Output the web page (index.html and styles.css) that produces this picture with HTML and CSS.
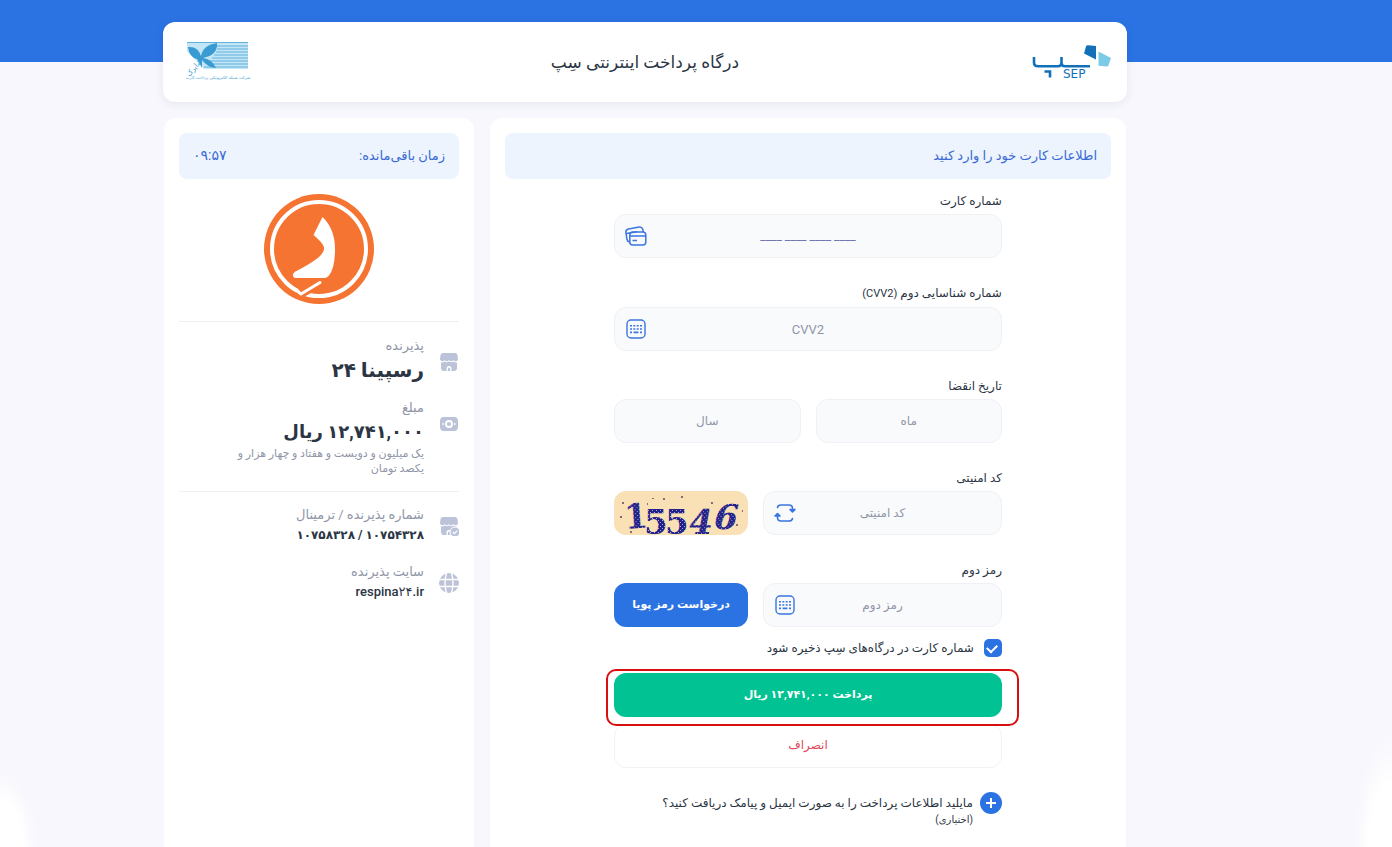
FILE: index.html
```html
<!DOCTYPE html>
<html lang="fa" dir="rtl">
<head>
    <meta charset="UTF-8">
    <meta name="viewport" content="width=device-width, initial-scale=1">
    <title>درگاه پرداخت اینترنتی سِپ</title>
    <link rel="stylesheet" href="styles.css">
</head>
<body>
<svg class="defs" width="0" height="0" aria-hidden="true">
    <symbol id="keyboard" viewBox="0 0 20 20">
        <rect x="1" y="1" width="18" height="18" rx="4" fill="none" stroke="currentColor" stroke-width="1.4"/>
        <path d="M4 6.8h2M7.3 6.8h2M10.7 6.8h2M14 6.8h2M4 10h2M7.3 10h2M10.7 10h2M14 10h2M4 13.4h2M7.6 13.4h4.8M14 13.4h2" fill="none" stroke="currentColor" stroke-width="1.6"/>
    </symbol>
    <symbol id="shop" viewBox="0 0 20 20">
        <path d="M4 1h12q2 0 2.500 2L19 7.500q-.6 1.800-2.300 1.800T14.500 8q-.8 1.300-2.300 1.300T10 8Q9.300 9.300 7.800 9.300T5.500 8Q4.800 9.300 3.300 9.300T1 7.500L1.500 3Q2 1 4 1z"/>
        <path d="M2 10.500q2.200.3 3.500-1 2 1.600 4.500 0 2.400 1.600 4.500 0 1.300 1.300 3.500 1V16q0 3-3 3h-2.500v-2.500Q12.500 14 10 14t-2.500 2.500V19H5q-3 0-3-3z"/>
        <path d="M8.800 19v-2q0-1.500 1.200-1.500t1.200 1.500v2z"/>
    </symbol>
</svg>
<div class="page">
    <header class="header">
        <svg class="logo-sep" viewBox="0 0 80 34" role="img" aria-label="SEP">
            <path d="M54 1.500q.5-1.500 2-1.300l8 .8v13.500L52 8.500z" fill="#1170b8"/>
            <path d="M66.500 6.500L79 13l-2.600 7.500q-.5 1.200-1.800 1l-8.100-.8z" fill="#7bcbe6"/>
            <path d="M2 12v5.500q0 3.800 4 3.800h20q3.500 0 3.500-3.500V12m0 6q0 3.300 3.500 3.300h25" fill="none" stroke="#1170b8" stroke-width="2.600"/>
            <path d="M12.500 26.500h5.500v6" fill="none" stroke="#1170b8" stroke-width="2.600"/>
            <text class="sep-name" x="31" y="33">SEP</text>
        </svg>
        <h1 class="title">درگاه پرداخت اینترنتی سِپ</h1>
        <svg class="logo-shaparak" viewBox="0 0 62 42" role="img" aria-label="شاپرک">
            <path d="M0 1h61v27H17L0 10z" fill="#c3e6f6"/>
            <path d="M0 1.500h61M29 5h32M30 8h31M29 11h32M27 14h34M25 17h36M18 20h43M20 23h41M17 26h44" stroke="#5fb0dc" stroke-width="1"/>
            <path d="M1 6q10-1 13 9Q16 4 30 2q1 12-14 15 9 1 13 10-9-1-14-8v8q-3-6-5-9-8-2-9-12z" fill="#3a9bd2"/>
            <text class="shaparak-word" transform="translate(9 28) rotate(-50)">شاپرک</text>
            <text class="shaparak-name" x="31" y="38">شرکت شبکه الکترونیکی پرداخت کارت</text>
        </svg>
    </header>

    <div class="columns">
        <main class="card">
            <h2 class="banner">اطلاعات کارت خود را وارد کنید</h2>
            <form class="form" onsubmit="return false">
                <div class="field">
                    <label for="pan">شماره کارت</label>
                    <div class="box">
                        <input id="pan" class="pan" type="text" placeholder="____ ____ ____ ____">
                        <button class="addon" type="button" aria-label="کارت‌های من">
                            <svg width="22" height="20" viewBox="0 0 22 20" fill="none" stroke="currentColor" stroke-width="1.500">
                                <rect x="4.800" y="6" width="16" height="13" rx="3"/>
                                <path d="M4.800 10h16M7.500 14.500h4.500M4.500 16Q2.400 15.500 2 13.500L.9 6.500q-.3-3 2.600-3.600L14.200 1q2.700-.3 3.600 2.300L18.300 6M1.500 7.500L12 5.800"/>
                            </svg>
                        </button>
                    </div>
                </div>
                <div class="field">
                    <label for="cvv">شماره شناسایی دوم <span class="latin">(CVV2)</span></label>
                    <div class="box">
                        <input id="cvv" type="text" placeholder="CVV2">
                        <button class="addon" type="button" aria-label="صفحه کلید"><svg width="20" height="20"><use href="#keyboard"/></svg></button>
                    </div>
                </div>
                <div class="field">
                    <label for="month">تاریخ انقضا</label>
                    <div class="halves">
                        <div class="box"><input id="month" type="text" placeholder="ماه"></div>
                        <div class="box"><input type="text" placeholder="سال" aria-label="سال"></div>
                    </div>
                </div>
                <div class="field">
                    <label for="captcha">کد امنیتی</label>
                    <div class="wide-narrow">
                        <div class="box">
                            <input id="captcha" type="text" placeholder="کد امنیتی">
                            <button class="addon" type="button" aria-label="کد جدید">
                                <svg width="22" height="20" viewBox="0 0 22 20" fill="none" stroke="currentColor" stroke-width="1.600" stroke-linecap="round" stroke-linejoin="round">
                                    <path d="M3.500 4.500Q4 2 7 2h8q3.500 0 3.500 3.500V8M18.500 15.500Q18 18 15 18H7q-3.500 0-3.500-3.500V11"/>
                                    <path d="M16 6.500L18.500 9 21 6.500zM1 13l2.500-2.500L6 13z" fill="currentColor"/>
                                </svg>
                            </button>
                        </div>
                        <svg class="captcha" viewBox="0 0 134 44" role="img" aria-label="کد امنیتی">
                            <defs>
                                <pattern id="speckle" width="4" height="4" patternUnits="userSpaceOnUse">
                                    <rect width="4" height="4" fill="#20208a"/>
                                    <path d="M0 1h1v1H0zM2 3h1v1H2z" fill="#b9a8c4"/>
                                </pattern>
                            </defs>
                            <rect width="134" height="44" rx="12" fill="#f9e0b5"/>
                            <g class="captcha-digits" fill="url(#speckle)">
                                <text x="11" y="38" transform="rotate(-4 11 38)">1</text>
                                <text x="30" y="43">5</text>
                                <text x="51" y="43">5</text>
                                <text transform="translate(73 43) skewX(-10)">4</text>
                                <text transform="translate(97 38) skewX(-16)">6</text>
                            </g>
                            <path d="M8 11h2v2H8zM6 25h2v2H6zM49 7h2v2h-2zM67 5h2v2h-2zM97 11h2v2h-2zM122 33h2v2h-2zM33 12h1v2h-1zM38 7h2v1h-2zM128 19h1v2h-1zM16 40h2v2h-2z" fill="#8a6a72"/>
                        </svg>
                    </div>
                </div>
                <div class="field">
                    <label for="pin">رمز دوم</label>
                    <div class="wide-narrow">
                        <div class="box">
                            <input id="pin" type="text" placeholder="رمز دوم">
                            <button class="addon" type="button" aria-label="صفحه کلید"><svg width="20" height="20"><use href="#keyboard"/></svg></button>
                        </div>
                        <button class="btn otp" type="button">درخواست رمز پویا</button>
                    </div>
                </div>
                <div class="save">
                    <input id="save" type="checkbox" checked>
                    <label for="save">شماره کارت در درگاه‌های سِپ ذخیره شود</label>
                </div>
                <div class="pay-wrap">
                    <button class="btn pay">پرداخت ۱۲,۷۴۱,۰۰۰ ریال</button>
                </div>
                <button class="btn cancel" type="button">انصراف</button>
                <div class="more">
                    <button id="more" class="plus" type="button" aria-label="افزودن">
                        <svg width="12" height="12" viewBox="0 0 12 12"><path d="M6 1v10M1 6h10" stroke="currentColor" stroke-width="2"/></svg>
                    </button>
                    <label for="more">مایلید اطلاعات پرداخت را به صورت ایمیل و پیامک دریافت کنید؟<small>(اختیاری)</small></label>
                </div>
            </form>
        </main>

        <aside class="card">
            <div class="banner timer">
                <span>زمان باقی‌مانده:</span>
                <span class="clock" dir="ltr">۰۹:۵۷</span>
            </div>
            <svg class="merchant-logo" viewBox="0 0 110 110" role="img" aria-label="رسپینا ۲۴">
                <circle cx="55" cy="55" r="55" fill="#f67431"/>
                <circle cx="55" cy="55" r="47" fill="none" stroke="#fff" stroke-width="4"/>
                <path d="M58.500 23Q71 35 71 55q0 19-6 26.500-2 2.500-5 2.500H32q-3 0-3-3 0-2 2-3.200Q48 69 55 63q6-6 5-10-2-5-10.500-12z" fill="#fff"/>
                <path d="M34 101l18-10" stroke="#f67431" stroke-width="9"/>
                <path d="M31 95l6 5 19-11.500" fill="none" stroke="#fff" stroke-width="3" stroke-linecap="round"/>
            </svg>
            <hr>
            <div class="info">
                <svg class="icon" viewBox="0 0 20 20"><use href="#shop"/></svg>
                <dl>
                    <dt>پذیرنده</dt>
                    <dd class="big name">رسپینا ۲۴</dd>
                </dl>
            </div>
            <div class="info">
                <svg class="icon" viewBox="0 0 20 20">
                    <path fill-rule="evenodd" d="M5 3h10q4 0 4 4v6q0 4-4 4H5q-4 0-4-4V7q0-4 4-4zm5 3a4 4 0 1 0 0 8 4 4 0 1 0 0-8zm0 2a2 2 0 1 1 0 4 2 2 0 1 1 0-4zM3.500 9v2h1.300V9zm11.700 0v2h1.300V9z"/>
                </svg>
                <dl>
                    <dt>مبلغ</dt>
                    <dd class="big">۱۲,۷۴۱,۰۰۰ ریال</dd>
                    <dd class="words">یک میلیون و دویست و هفتاد و چهار هزار و یکصد تومان</dd>
                </dl>
            </div>
            <hr>
            <div class="info small">
                <svg class="icon" viewBox="0 0 20 20">
                    <use href="#shop" width="20" height="20"/>
                    <circle cx="16" cy="16" r="5" stroke="#fff"/>
                    <path d="M13.700 16l1.600 1.600 3-3" fill="none" stroke="#fff" stroke-width="1.200"/>
                </svg>
                <dl>
                    <dt>شماره پذیرنده / ترمینال</dt>
                    <dd>۱۰۷۵۴۳۲۸ / ۱۰۷۵۸۳۲۸</dd>
                </dl>
            </div>
            <div class="info small">
                <svg class="icon" viewBox="0 0 20 20">
                    <circle cx="10" cy="10" r="10"/>
                    <path d="M0 6.500h20M0 13.500h20M7.500 0Q4.500 10 7.500 20M12.500 0Q15.500 10 12.500 20" fill="none" stroke="#fff" stroke-width="1.400"/>
                </svg>
                <dl>
                    <dt>سایت پذیرنده</dt>
                    <dd class="site"><span dir="ltr">respina۲۴.ir</span></dd>
                </dl>
            </div>
        </aside>
    </div>
</div>
</body>
</html>
```
FILE: styles.css
```css
* {
    box-sizing: border-box;
}

body {
    margin: 0;
    min-height: 100vh;
    display: flex;
    font-family: Roboto, "DejaVu Sans", sans-serif;
    font-size: 12px;
    color: #2b3544;
    background-color: #f7f7fd;
    background-image:
            linear-gradient(#2b72e3, #2b72e3),
            radial-gradient(ellipse 38px 75px at 0% 100%, #fff 60%, transparent),
            radial-gradient(ellipse 38px 110px at 100% 100%, #fff 60%, transparent);
    background-size: 100% 62px, auto, auto;
    background-repeat: no-repeat;
}

button, input {
    font: inherit;
}

.defs {
    position: absolute;
}

.page {
    flex: 1;
    display: flex;
    flex-direction: column;
    gap: 16px;
    padding: 22px 265px 0 163px;
}

.header {
    display: grid;
    grid-template-columns: 1fr auto 1fr;
    align-items: center;
    height: 80px;
    padding: 0 15px;
    border-radius: 12px;
    background: #fff;
    box-shadow: 0 2px 10px rgba(40, 40, 80, .08);
}

.title {
    margin: 0;
    font-size: 17px;
    font-weight: normal;
}

.logo-sep {
    width: 80px;
    height: 34px;
    overflow: visible;
}

.sep-name {
    font-family: "DejaVu Sans", sans-serif;
    font-size: 12px;
    direction: ltr;
    fill: #1170b8;
}

.logo-shaparak {
    width: 62px;
    height: 42px;
    margin-left: 9px;
    justify-self: end;
    overflow: visible;
}

.shaparak-word,
.shaparak-name {
    font-family: "DejaVu Sans", sans-serif;
    font-size: 7px;
    text-anchor: middle;
    fill: #3a9bd2;
}

.shaparak-name {
    font-size: 4px;
}

.columns {
    flex: 1;
    display: grid;
    grid-template-columns: 636fr 310fr;
    gap: 16px;
    padding: 0 1px;
}

.card {
    padding: 15px;
    border-radius: 12px 12px 0 0;
    background: #fff;
}

.banner {
    display: flex;
    align-items: center;
    height: 46px;
    margin: 0;
    padding: 0 14px 2px;
    border-radius: 8px;
    font-size: 13px;
    font-weight: normal;
    color: #3a6ad4;
    background: #edf4fe;
}

.timer {
    justify-content: space-between;
}

.clock {
    font-size: 14px;
}

.form {
    display: flex;
    flex-direction: column;
    width: 64%;
    margin: 9px auto 0;
}

.field {
    margin-bottom: 22px;
}

.field > label {
    display: block;
    line-height: 26px;
}

.latin {
    font-size: 11px;
}

.box {
    position: relative;
    height: 44px;
}

.box input {
    width: 100%;
    height: 100%;
    padding: 0 50px;
    border: 1px solid #f0f1f5;
    border-radius: 12px;
    text-align: center;
    color: #2b3544;
    background: #f9fafc;
}

.box input::placeholder {
    color: #8f96a8;
    opacity: 1;
}

.box .pan::placeholder {
    color: #6f76b0;
}

#cvv {
    font-size: 13px;
}

.addon {
    position: absolute;
    left: 10px;
    top: 10px;
    display: flex;
    align-items: center;
    justify-content: center;
    width: 24px;
    height: 24px;
    padding: 0;
    border: none;
    color: #3b75e0;
    background: none;
}

.halves {
    display: grid;
    grid-template-columns: 1fr 1fr;
    gap: 15px;
}

.halves input {
    padding: 0 10px;
}

.wide-narrow {
    display: grid;
    grid-template-columns: 239fr 134fr;
    gap: 15px;
}

.captcha {
    width: 100%;
    height: 44px;
    overflow: visible;
}

.captcha-digits {
    font-family: "DejaVu Serif", serif;
    font-size: 34px;
    font-weight: bold;
    direction: ltr;
}

.btn {
    height: 44px;
    padding: 0 0 2px;
    border: none;
    border-radius: 12px;
    font-size: 11px;
    font-weight: bold;
    color: #fff;
}

.otp {
    background: #2b72e3;
}

.save {
    display: flex;
    align-items: center;
    gap: 10px;
    height: 18px;
    margin: -10px 0 16px;
}

.save input {
    appearance: none;
    width: 18px;
    height: 18px;
    margin: 0;
    border-radius: 5px;
    background: #2b72e3;
}

.save input:checked::before {
    content: "";
    display: block;
    width: 8px;
    height: 5px;
    margin: 5px;
    border: solid #fff;
    border-width: 0 0 2px 2px;
    transform: rotate(-45deg);
}

.pay-wrap {
    position: relative;
    z-index: 1;
    display: flex;
}

.pay-wrap::after {
    content: "";
    position: absolute;
    inset: -4px -17px -9px -8px;
    border: 2px solid #d80f0f;
    border-radius: 10px;
    pointer-events: none;
}

.pay {
    flex: 1;
    background: #00c292;
}

.cancel {
    margin-top: 7px;
    border: 1px solid #f2f3f6;
    font-size: 12px;
    font-weight: normal;
    color: #e04a58;
    background: #fff;
}

.more {
    display: flex;
    align-items: flex-start;
    gap: 7px;
    margin-top: 24px;
    line-height: 22px;
}

.more small {
    display: block;
    font-size: 10px;
    line-height: 12px;
}

.plus {
    flex: none;
    display: flex;
    align-items: center;
    justify-content: center;
    width: 22px;
    height: 22px;
    padding: 0;
    border: none;
    border-radius: 50%;
    color: #fff;
    background: #2b72e3;
}

.merchant-logo {
    display: block;
    width: 110px;
    height: 110px;
    margin: 15px auto 17px;
}

hr {
    height: 1px;
    margin: 0;
    border: none;
    background: #eeeff3;
}

.info {
    display: flex;
    gap: 15px;
    margin-top: 14px;
}

.info.small {
    margin: 13px 0 17px;
}

.icon {
    flex: none;
    width: 20px;
    height: 20px;
    margin-top: 16px;
    fill: #bcc3d9;
}

.small .icon {
    margin-top: 11px;
}

dl {
    margin: 0;
}

dt {
    font-size: 13px;
    line-height: 20px;
    color: #8f96a8;
}

dd {
    margin: 0;
    font-weight: bold;
    line-height: 20px;
}

.big {
    font-size: 18px;
    line-height: 28px;
}

.big.name {
    font-size: 20px;
}

.site {
    font-size: 13px;
    font-weight: 500;
}

.words {
    width: 200px;
    margin-bottom: 15px;
    font-size: 11px;
    font-weight: normal;
    line-height: 15px;
    color: #8f96a8;
}
```
